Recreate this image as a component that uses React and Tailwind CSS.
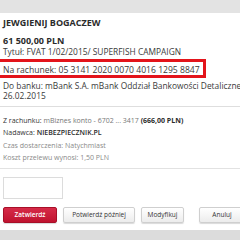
import React from "react";

const font = { fontFamily: '"Open Sans", "Liberation Sans", sans-serif' };

const Button = ({ children, className = "" }) => (
  <button
    className={
      "h-[16px] rounded-[2px] border text-[6.5px] leading-none shadow-[0_1px_1px_rgba(0,0,0,0.15)] " + className
    }
  >
    {children}
  </button>
);

export default function App() {
  return (
    <div className="w-[240px] h-[240px] overflow-hidden bg-white flex flex-col text-[#2b2b2b]" style={font}>
      {/* top bar */}
      <div className="h-[13px] shrink-0 bg-[#e3e3e3]" />

      <div className="flex-1 px-[3px]">
        <div className="mt-[4px] text-[9px] leading-[12px] font-bold">JEWGIENIJ BOGACZEW</div>
        <div className="mt-[7px] text-[9px] leading-[10px] font-bold">61 500,00 PLN</div>
        <div className="mt-[1px] text-[8.4px] leading-[10px] text-[#3a3a3a] whitespace-nowrap">
          Tytuł: FVAT 1/02/2015/ SUPERFISH CAMPAIGN
        </div>

        <div className="relative mt-[7.5px] text-[8.6px] leading-[10px] text-[#3a3a3a] whitespace-nowrap">
          Na rachunek: 05 3141 2020 0070 4016 1295 8847
          {/* annotation box */}
          <div className="absolute top-[-6px] bottom-[-3.5px] left-[-12px] w-[215px] border-[3px] border-[#e3141b]" />
        </div>

        <div className="mt-[6.5px] w-[260px] text-[8.4px] leading-[9.5px] text-[#3a3a3a] whitespace-nowrap">
          Do banku: mBank S.A. mBank Oddział Bankowości Detalicznej
        </div>
        <div className="text-[8.4px] leading-[9.5px] text-[#3a3a3a]">26.02.2015</div>

        <div className="mt-[6px] h-px bg-[#dedede] -mx-[3px]" />

        <div className="mt-[8px] text-[7px] leading-[12.3px] whitespace-nowrap">
          <div>
            <span className="text-[#333]">Z rachunku:</span>{" "}
            <span className="text-[#777]">mBiznes konto - 6702 ... 3417</span>{" "}
            <span className="font-bold">(666,00 PLN)</span>
          </div>
          <div>
            <span className="text-[#333]">Nadawca:</span>{" "}
            <span className="font-semibold">NIEBEZPIECZNIK.PL</span>
          </div>
          <div className="text-[#8a8a8a]">Czas dostarczenia: Natychmiast</div>
          <div className="text-[#8a8a8a]">Koszt przelewu wynosi: 1,50 PLN</div>
        </div>

        <div className="mt-[4px] h-px bg-[#e2e2e2] -mx-[3px]" />

        <div className="mt-[8px] w-[60px] h-[22px] border border-[#dcdcdc] bg-white" />

        <div className="mt-[8px] flex whitespace-nowrap">
          <Button className="w-[54px] shrink-0 bg-gradient-to-b from-[#d62a48] to-[#c0122f] border-[#a80f28] text-white font-semibold">
            Zatwierdź
          </Button>
          <Button className="ml-[6px] w-[72px] shrink-0 bg-gradient-to-b from-white to-[#ececec] border-[#cfcfcf] text-[#333]">
            Potwierdź później
          </Button>
          <Button className="ml-[6px] w-[43px] shrink-0 bg-gradient-to-b from-white to-[#ececec] border-[#cfcfcf] text-[#333]">
            Modyfikuj
          </Button>
          <Button className="ml-[15px] w-[46px] shrink-0 bg-gradient-to-b from-white to-[#ececec] border-[#cfcfcf] text-[#333]">
            Anuluj
          </Button>
        </div>
      </div>

      {/* bottom bar */}
      <div className="h-[10px] shrink-0 bg-[#dcdcdc]" />
    </div>
  );
}
